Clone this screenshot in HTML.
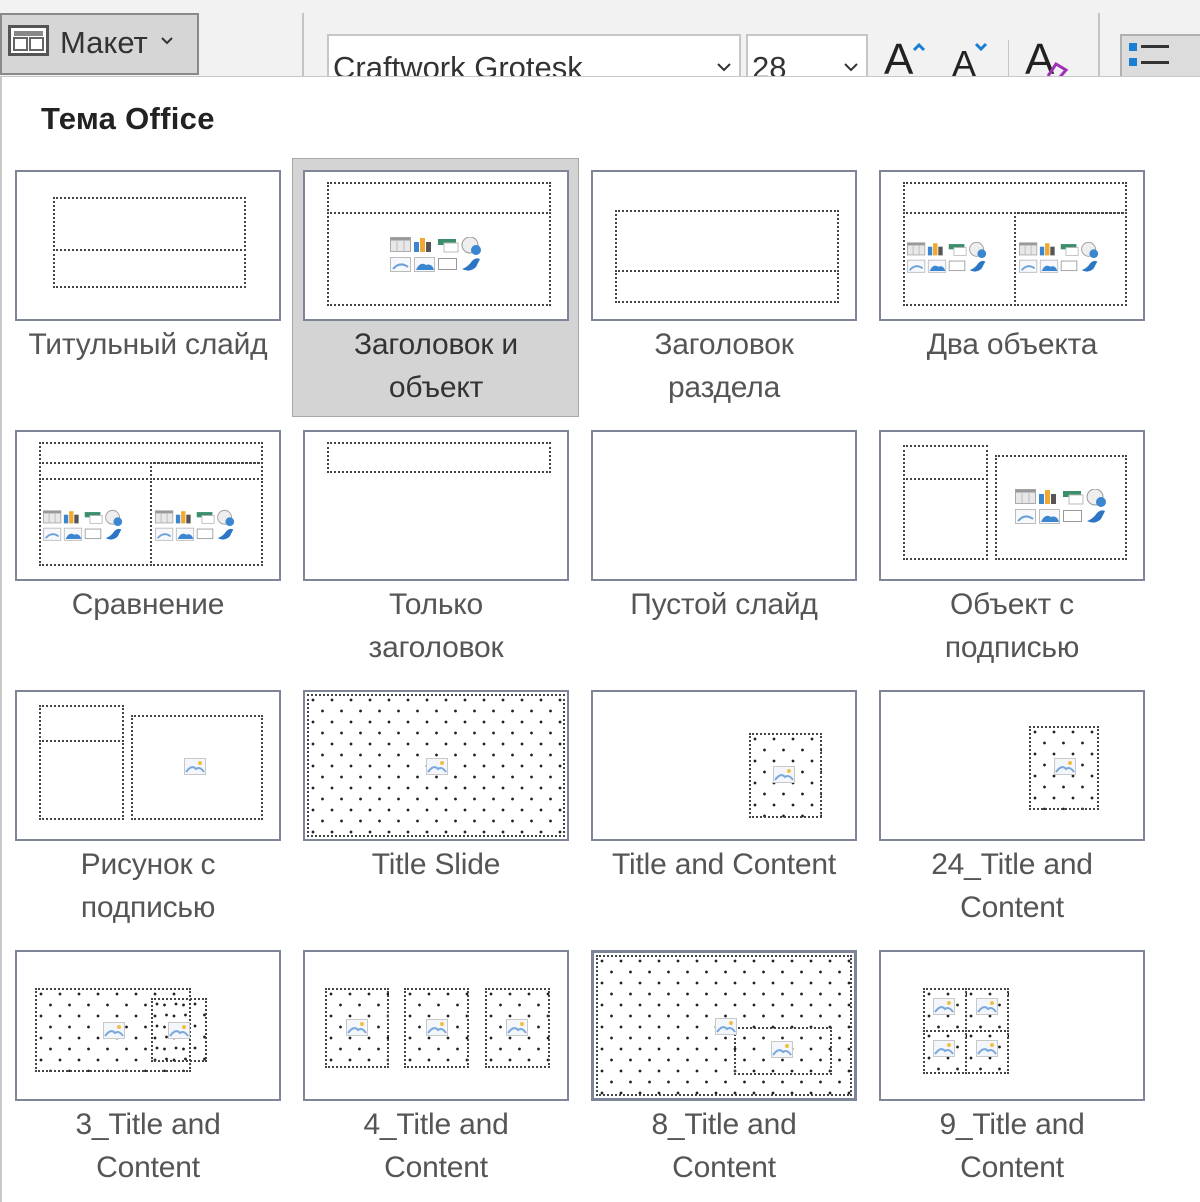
<!DOCTYPE html>
<html><head><meta charset="utf-8">
<style>
*{box-sizing:border-box;margin:0;padding:0}
body{width:1200px;height:1202px;overflow:hidden;background:#fff;position:relative;font-family:"Liberation Sans","DejaVu Sans",sans-serif}
.tb{position:absolute;left:0;top:0;width:1200px;height:77px;background:#f2f2f2;overflow:hidden}
.panel{position:absolute;left:0;top:76px;width:1200px;height:1126px;background:#fff;border-top:1px solid #c8c8c8;border-left:2px solid #c8c8c8}
.abs{position:absolute}
.t{position:absolute;width:266px;height:151px;border:2px solid #7f8598;background:#fff}
.b{position:absolute;border:2px dotted #444}
.d{background-image:radial-gradient(circle,#222 1.2px,transparent 1.6px),radial-gradient(circle,#222 1.2px,transparent 1.6px);background-size:19px 22px,19px 22px;background-position:4px 4px,13.5px 15px}
.lbl{position:absolute;width:288px;text-align:center;font-size:30px;line-height:43px;color:#555;letter-spacing:-0.2px}
.ic{position:absolute;width:92px;height:36px}
.pi{position:absolute;width:22px;height:17px}
</style></head><body>
<div class="tb">
  <div class="abs" style="left:0;top:13px;width:199px;height:62px;background:#d6d6d6;border:2px solid #8a8a8a"></div>
  <svg class="abs" style="left:8px;top:25px" width="42" height="32"><rect x="1.5" y="1.5" width="38" height="28" fill="#fff" stroke="#555" stroke-width="3"/><rect x="6" y="6" width="29" height="5" fill="#888"/><rect x="6" y="13" width="13" height="12" fill="none" stroke="#666" stroke-width="2"/><rect x="22" y="13" width="13" height="12" fill="none" stroke="#666" stroke-width="2"/></svg>
  <div class="abs" style="left:60px;top:25px;font-size:31px;color:#333">Макет</div>
  <svg class="abs" style="left:160px;top:36px" width="14" height="10"><path d="M2 2 L7 7 L12 2" fill="none" stroke="#333" stroke-width="2"/></svg>
  <div class="abs" style="left:302px;top:13px;width:2px;height:64px;background:#c4c4c4"></div>
  <div class="abs" style="left:327px;top:34px;width:414px;height:50px;background:#fff;border:2px solid #c6c6c6"></div>
  <div class="abs" style="left:333px;top:50px;font-size:31px;color:#333">Craftwork Grotesk</div>
  <svg class="abs" style="left:716px;top:62px" width="16" height="10"><path d="M2 2 L8 8 L14 2" fill="none" stroke="#333" stroke-width="2"/></svg>
  <div class="abs" style="left:746px;top:34px;width:122px;height:50px;background:#fff;border:2px solid #c6c6c6"></div>
  <div class="abs" style="left:752px;top:50px;font-size:31px;color:#333">28</div>
  <svg class="abs" style="left:843px;top:62px" width="16" height="10"><path d="M2 2 L8 8 L14 2" fill="none" stroke="#333" stroke-width="2"/></svg>
  <div class="abs" style="left:884px;top:38px;font-size:44px;color:#222;line-height:44px">A</div>
  <svg class="abs" style="left:912px;top:42px" width="14" height="10"><path d="M2 8 L7 3 L12 8" fill="none" stroke="#1a7fd4" stroke-width="3"/></svg>
  <div class="abs" style="left:952px;top:46px;font-size:36px;color:#222;line-height:36px">A</div>
  <svg class="abs" style="left:974px;top:42px" width="14" height="10"><path d="M2 2 L7 7 L12 2" fill="none" stroke="#1a7fd4" stroke-width="3"/></svg>
  <div class="abs" style="left:1008px;top:40px;width:1px;height:37px;background:#c4c4c4"></div>
  <div class="abs" style="left:1025px;top:38px;font-size:44px;color:#222;line-height:44px">A</div>
  <svg class="abs" style="left:1044px;top:60px" width="28" height="17"><path d="M4 16 L12 4 L22 10 L16 17" fill="none" stroke="#a030b8" stroke-width="3"/></svg>
  <div class="abs" style="left:1098px;top:13px;width:2px;height:64px;background:#c4c4c4"></div>
  <div class="abs" style="left:1120px;top:34px;width:90px;height:50px;background:#dcdcdc;border:2px solid #b0b0b0"></div>
  <div class="abs" style="left:1129px;top:43px;width:8px;height:8px;background:#1a7fd4"></div>
  <div class="abs" style="left:1141px;top:45px;width:28px;height:3px;background:#333"></div>
  <div class="abs" style="left:1129px;top:58px;width:8px;height:8px;background:#1a7fd4"></div>
  <div class="abs" style="left:1141px;top:61px;width:28px;height:3px;background:#333"></div>
</div>
<div class="panel"></div>
<div class="abs" style="left:41px;top:101px;font-size:31px;font-weight:bold;color:#222;letter-spacing:0.3px">Тема Office</div>

<div class="abs" style="left:292px;top:158px;width:287px;height:259px;background:#d4d4d4;border:1px solid #a8a8a8"></div>

<svg width="0" height="0" style="position:absolute">
<defs>
<g id="cl">
<rect x="0.5" y="0.5" width="20" height="14" fill="#e8e8e8" stroke="#aaa"/><rect x="0.5" y="0.5" width="20" height="3" fill="#999"/><line x1="7" y1="3" x2="7" y2="14" stroke="#bbb"/><line x1="14" y1="3" x2="14" y2="14" stroke="#bbb"/>
<rect x="24" y="5" width="5" height="10" fill="#3b86d0"/><rect x="30" y="1" width="5" height="14" fill="#f0a830"/><rect x="36" y="5" width="5" height="10" fill="#555"/>
<rect x="48" y="2" width="18" height="6" fill="#3a8f6a"/><rect x="54" y="6" width="14" height="9" fill="#fff" stroke="#bbb"/>
<circle cx="80" cy="8" r="8" fill="#eee" stroke="#999"/><circle cx="86" cy="13" r="5" fill="#3b86d0"/>
<rect x="0.5" y="20.5" width="20" height="14" fill="#f6f8fb" stroke="#bbb"/><path d="M3 32 Q10 24 18 30" stroke="#6aa0d8" fill="none" stroke-width="2"/>
<rect x="24.5" y="20.5" width="20" height="14" fill="#f6f8fb" stroke="#bbb"/><path d="M26 33 Q30 24 36 28 Q42 26 44 33 Z" fill="#3b86d0"/>
<rect x="48.5" y="21.5" width="18" height="11" fill="#fff" stroke="#999"/>
<path d="M72 32 Q78 30 82 24 Q86 20 90 22 L86 30 Q80 36 72 32Z" fill="#2c74c4"/>
</g>
<g id="pc"><rect x="0.5" y="0.5" width="21" height="16" fill="#f3f6fa" stroke="#c8c8c8"/><circle cx="16" cy="5" r="2" fill="#f2c040"/><path d="M2 14 Q8 6 12 11 Q16 8 20 14" stroke="#7aa8dc" fill="none" stroke-width="2"/></g>
</defs></svg>

<!-- Row 1 -->
<div class="t" style="left:15px;top:170px">
  <div class="b" style="left:36px;top:25px;width:193px;height:54px"></div>
  <div class="b" style="left:36px;top:77px;width:193px;height:39px"></div>
</div>
<div class="t" style="left:303px;top:170px">
  <div class="b" style="left:22px;top:10px;width:224px;height:32px"></div>
  <div class="b" style="left:22px;top:40px;width:224px;height:94px"></div>
  <svg class="ic" style="left:85px;top:65px"><use href="#cl"/></svg>
</div>
<div class="t" style="left:591px;top:170px">
  <div class="b" style="left:22px;top:38px;width:224px;height:62px"></div>
  <div class="b" style="left:22px;top:98px;width:224px;height:33px"></div>
</div>
<div class="t" style="left:879px;top:170px">
  <div class="b" style="left:22px;top:10px;width:224px;height:32px"></div>
  <div class="b" style="left:22px;top:40px;width:113px;height:94px"></div>
  <div class="b" style="left:133px;top:40px;width:113px;height:94px"></div>
  <svg class="ic" style="left:26px;top:68px;width:80px" viewBox="0 0 92 36"><use href="#cl"/></svg>
  <svg class="ic" style="left:138px;top:68px;width:80px" viewBox="0 0 92 36"><use href="#cl"/></svg>
</div>
<div class="lbl" style="left:4px;top:323px">Титульный слайд</div>
<div class="lbl" style="left:292px;top:323px;color:#333">Заголовок и<br>объект</div>
<div class="lbl" style="left:580px;top:323px">Заголовок<br>раздела</div>
<div class="lbl" style="left:868px;top:323px">Два объекта</div>

<!-- Row 2 -->
<div class="t" style="left:15px;top:430px">
  <div class="b" style="left:22px;top:10px;width:224px;height:22px"></div>
  <div class="b" style="left:22px;top:30px;width:113px;height:18px"></div>
  <div class="b" style="left:133px;top:30px;width:113px;height:18px"></div>
  <div class="b" style="left:22px;top:46px;width:113px;height:88px"></div>
  <div class="b" style="left:133px;top:46px;width:113px;height:88px"></div>
  <svg class="ic" style="left:26px;top:76px;width:80px" viewBox="0 0 92 36"><use href="#cl"/></svg>
  <svg class="ic" style="left:138px;top:76px;width:80px" viewBox="0 0 92 36"><use href="#cl"/></svg>
</div>
<div class="t" style="left:303px;top:430px">
  <div class="b" style="left:22px;top:10px;width:224px;height:31px"></div>
</div>
<div class="t" style="left:591px;top:430px"></div>
<div class="t" style="left:879px;top:430px">
  <div class="b" style="left:22px;top:13px;width:85px;height:35px"></div>
  <div class="b" style="left:22px;top:46px;width:85px;height:82px"></div>
  <div class="b" style="left:114px;top:23px;width:132px;height:105px"></div>
  <svg class="ic" style="left:134px;top:57px"><use href="#cl"/></svg>
</div>
<div class="lbl" style="left:4px;top:583px">Сравнение</div>
<div class="lbl" style="left:292px;top:583px">Только<br>заголовок</div>
<div class="lbl" style="left:580px;top:583px">Пустой слайд</div>
<div class="lbl" style="left:868px;top:583px">Объект с<br>подписью</div>

<!-- Row 3 -->
<div class="t" style="left:15px;top:690px">
  <div class="b" style="left:22px;top:13px;width:85px;height:37px"></div>
  <div class="b" style="left:22px;top:48px;width:85px;height:80px"></div>
  <div class="b" style="left:114px;top:23px;width:132px;height:105px"></div>
  <svg class="pi" style="left:167px;top:66px"><use href="#pc"/></svg>
</div>
<div class="t" style="left:303px;top:690px">
  <div class="b d" style="left:2px;top:2px;width:258px;height:143px"></div>
  <svg class="pi" style="left:121px;top:66px"><use href="#pc"/></svg>
</div>
<div class="t" style="left:591px;top:690px">
  <div class="b d" style="left:156px;top:41px;width:73px;height:85px"></div>
  <svg class="pi" style="left:180px;top:74px"><use href="#pc"/></svg>
</div>
<div class="t" style="left:879px;top:690px">
  <div class="b d" style="left:148px;top:34px;width:70px;height:84px"></div>
  <svg class="pi" style="left:173px;top:66px"><use href="#pc"/></svg>
</div>
<div class="lbl" style="left:4px;top:843px">Рисунок с<br>подписью</div>
<div class="lbl" style="left:292px;top:843px">Title Slide</div>
<div class="lbl" style="left:580px;top:843px">Title and Content</div>
<div class="lbl" style="left:868px;top:843px">24_Title and<br>Content</div>

<!-- Row 4 -->
<div class="t" style="left:15px;top:950px">
  <div class="b d" style="left:18px;top:36px;width:156px;height:84px"></div>
  <div class="b d" style="left:134px;top:46px;width:56px;height:64px"></div>
  <svg class="pi" style="left:86px;top:70px"><use href="#pc"/></svg>
  <svg class="pi" style="left:151px;top:70px"><use href="#pc"/></svg>
</div>
<div class="t" style="left:303px;top:950px">
  <div class="b d" style="left:20px;top:36px;width:64px;height:80px"></div>
  <div class="b d" style="left:99px;top:36px;width:65px;height:80px"></div>
  <div class="b d" style="left:180px;top:36px;width:65px;height:80px"></div>
  <svg class="pi" style="left:41px;top:67px"><use href="#pc"/></svg>
  <svg class="pi" style="left:121px;top:67px"><use href="#pc"/></svg>
  <svg class="pi" style="left:201px;top:67px"><use href="#pc"/></svg>
</div>
<div class="t" style="left:591px;top:950px;border-width:3px">
  <div class="b d" style="left:2px;top:2px;width:256px;height:141px"></div>
  <div class="b" style="left:140px;top:74px;width:98px;height:48px"></div>
  <svg class="pi" style="left:121px;top:65px"><use href="#pc"/></svg>
  <svg class="pi" style="left:177px;top:88px"><use href="#pc"/></svg>
</div>
<div class="t" style="left:879px;top:950px">
  <div class="b d" style="left:42px;top:36px;width:44px;height:44px"></div>
  <div class="b d" style="left:84px;top:36px;width:44px;height:44px"></div>
  <div class="b d" style="left:42px;top:78px;width:44px;height:44px"></div>
  <div class="b d" style="left:84px;top:78px;width:44px;height:44px"></div>
  <svg class="pi" style="left:52px;top:46px"><use href="#pc"/></svg>
  <svg class="pi" style="left:95px;top:46px"><use href="#pc"/></svg>
  <svg class="pi" style="left:52px;top:88px"><use href="#pc"/></svg>
  <svg class="pi" style="left:95px;top:88px"><use href="#pc"/></svg>
</div>
<div class="lbl" style="left:4px;top:1103px">3_Title and<br>Content</div>
<div class="lbl" style="left:292px;top:1103px">4_Title and<br>Content</div>
<div class="lbl" style="left:580px;top:1103px">8_Title and<br>Content</div>
<div class="lbl" style="left:868px;top:1103px">9_Title and<br>Content</div>
</body></html>
